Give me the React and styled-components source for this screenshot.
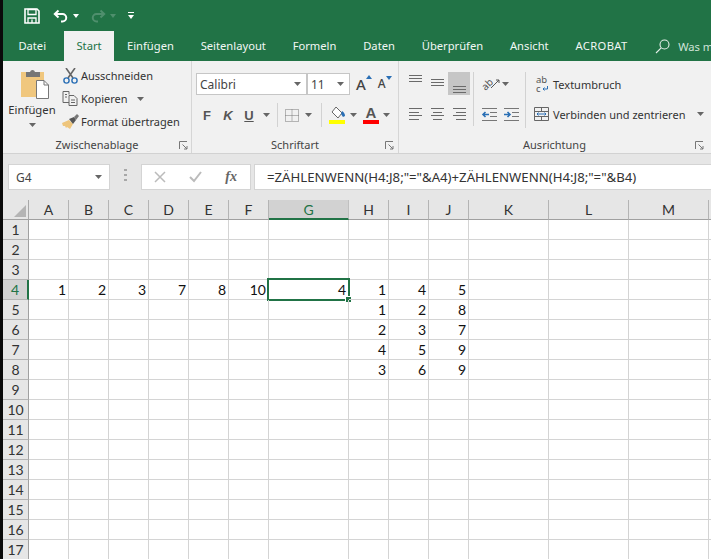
import React from "react";
import styled, { createGlobalStyle } from "styled-components";

const Global = createGlobalStyle`
  html, body { margin: 0; padding: 0; height: 559px; overflow: hidden; background: #fff; }
  * { box-sizing: border-box; }
`;
const UI = `"Noto Sans", "Open Sans", sans-serif`;
const GREEN = "#217346";

const Page = styled.div`display: flex; width: 711px; height: 559px; overflow: hidden; font-family: ${UI}; color: #444;`;
const Edge = styled.div`flex: 0 0 3px; background: #0a0a0a;`;
const Main = styled.div`flex: 1; min-width: 0; display: flex; flex-direction: column; overflow: hidden;`;

const TitleBar = styled.div`flex: none; height: 31px; background: ${GREEN}; display: flex; align-items: center; padding-left: 21px;`;
const QatIcon = styled.svg`display: block; margin-right: ${p => p.$mr || 0}px;`;
const TabBar = styled.div`flex: none; height: 30px; background: ${GREEN}; display: flex; padding-left: 2px;`;
const Tab = styled.div`
  padding: ${p => p.$active ? "0 12px" : "0 13.4px"}; margin: ${p => p.$active ? "0 0 0 5px" : "0"};
  font-size: 11.2px; line-height: 30px; white-space: nowrap; letter-spacing: ${p => p.$ls || 0}px;
  color: ${p => p.$active ? GREEN : "#f2f7f4"};
  background: ${p => p.$active ? "#f1f1f1" : "transparent"};
`;
const Search = styled.div`display: flex; align-items: center; gap: 8px; margin-left: 14px; color: #cfe3d8; font-size: 11.2px; white-space: nowrap;`;

const Ribbon = styled.div`flex: none; height: 93px; background: #f1f1f1; border-bottom: 1px solid #d2d2d2; display: flex;`;
const Group = styled.div`
  flex: 0 0 ${p => p.$w}px; min-width: 0; position: relative; display: flex; flex-direction: column;
  border-right: 1px solid ${p => p.$last ? "transparent" : "#d6d6d6"};
`;
const GroupBody = styled.div`flex: 1; display: flex; padding: ${p => p.$pad};`;
const GroupLabel = styled.div`height: 16px; line-height: 16px; font-size: 11px; text-align: center; color: #444;`;
const Launcher = styled.svg`position: absolute; right: ${p => p.$r || 4}px; bottom: 3px;`;

const PasteCol = styled.div`width: 48px; display: flex; flex-direction: column; align-items: center; font-size: 11.3px; color: #333;`;
const PasteArt = styled.svg`display: block; margin: 5px 0 0 6px; flex: none;`;
const PasteText = styled.div`line-height: 16px; margin: 3px 0 5px;`;
const ClipCol = styled.div`margin-left: 6px; display: flex; flex-direction: column;`;
const ClipRow = styled.div`height: 23px; display: flex; align-items: center; font-size: 11px; white-space: nowrap; color: #333;`;
const ClipIcon = styled.svg`flex: 0 0 19px;`;

const Caret = styled.svg`display: block; flex: none; margin-left: ${p => p.$ml || 0}px;`;
const FontCol = styled.div`display: flex; flex-direction: column;`;
const FontRow = styled.div`display: flex; align-items: center;`;
const Field = styled.div`
  width: ${p => p.$w}px; height: 22px; background: #fff; border: 1px solid #c6c6c6;
  display: flex; align-items: center; justify-content: space-between; padding: 0 5px 0 3px; font-size: 12px; color: #444;
`;
const GrowA = styled.div`display: flex; align-items: flex-start; margin-left: ${p => p.$ml}px; color: #444;`;
const GrowLetter = styled.span`font-size: ${p => p.$s}px; line-height: 18px; font-weight: 500;`;
const StyleRow = styled.div`height: 24px; margin-top: 8px; display: flex; align-items: center; padding-left: 3px;`;
const StyleBtn = styled.span`
  width: 16px; text-align: center; font-family: "Liberation Sans", sans-serif; font-size: 13px; font-weight: 700;
  font-style: ${p => p.$i ? "italic" : "normal"}; text-decoration: ${p => p.$u ? "underline" : "none"}; margin-right: ${p => p.$mr || 5}px; color: #555;
`;
const VSep = styled.div`width: 1px; height: ${p => p.$h || 24}px; background: #d2d2d2; margin: 0 ${p => p.$mr}px 0 ${p => p.$ml}px; flex: none;`;
const Tool = styled.svg`display: block; flex: none;`;
const ColorTool = styled.div`flex: none; width: 16px; margin-left: ${p => p.$ml || 0}px; display: flex; flex-direction: column; align-items: center;`;
const ColorLetter = styled.span`font-family: "Liberation Sans", sans-serif; font-weight: 700; font-size: 15px; line-height: 13px; height: 14px; color: #555;`;
const ColorBar = styled.div`width: 16px; height: 4px; background: ${p => p.$c};`;

const AlignGrid = styled.div`display: grid; grid-template-columns: repeat(3, 22px); grid-auto-rows: 23px; row-gap: 8px;`;
const AlignCell = styled.div`display: flex; justify-content: center; background: ${p => p.$on ? "#c6c6c6" : "transparent"};`;
const OrientCol = styled.div`display: grid; grid-template-columns: 22px 16px; grid-auto-rows: 23px; row-gap: 8px; align-items: center; width: 41px;`;
const OrientTop = styled.div`grid-column: 1 / 3; display: flex; align-items: center;`;
const OrientText = styled.span`display: block; font-size: 10px; line-height: 10px; color: #555; transform: rotate(-45deg); width: 12px; margin-right: -3px;`;
const WrapCol = styled.div`display: flex; flex-direction: column;`;
const WrapRow = styled.div`height: 24px; margin-bottom: ${p => p.$mb || 0}px; display: flex; align-items: center; font-size: 11px; white-space: nowrap; color: #333;`;
const WrapIcon = styled.svg`flex: none; margin-right: 4px;`;
const WrapGlyph = styled.div`flex: none; width: 15px; margin-right: 4px; display: flex; flex-direction: column; font-size: 9.5px; line-height: 9.5px; color: #555; text-align: center;`;
const WrapLine = styled.div`display: flex; align-items: center; justify-content: ${p => p.$start ? "flex-start" : "center"}; gap: 1px; padding-left: ${p => p.$start ? 2 : 0}px;`;

const FormulaBand = styled.div`flex: none; height: 46px; background: #e6e6e6; display: flex; align-items: flex-start; padding: 10px 0 0 5px;`;
const NameBox = styled.div`
  width: 102px; height: 26px; background: #fff; border: 1px solid #d4d4d4; display: flex; align-items: center;
  justify-content: space-between; padding: 0 7px; font-size: 12px; color: #444;
`;
const Dots = styled.div`width: 31px; display: flex; justify-content: center; padding-top: 5px;`;
const FxBox = styled.div`
  width: 110px; height: 26px; background: #fff; border: 1px solid #d4d4d4; display: flex; align-items: center;
  justify-content: space-between; padding: 0 13px 0 12px;
`;
const FxLabel = styled.span`font-family: "Liberation Serif", serif; font-style: italic; font-weight: 700; font-size: 14px; color: #666;`;
const FormulaInput = styled.div`
  flex: 1; margin-left: 3px; height: 26px; background: #fff; border: 1px solid #d4d4d4; border-right: 0; display: flex; align-items: center;
  padding-left: 12px; font-size: 13.2px; color: #333; white-space: nowrap;
`;

const Sheet = styled.div`
  flex: none; display: grid; grid-template-columns: 26px repeat(6, 40px) 80px repeat(3, 40px) repeat(3, 80px) 3px;
  grid-auto-rows: 20px; background: #fff; font-family: Lato, sans-serif;
`;
const Corner = styled.div`background: #e6e6e6; border-right: 1px solid #a8a8a8; border-bottom: 1px solid #a0a0a0; display: flex; align-items: flex-end; justify-content: flex-end; padding: 0 2px 2px 0;`;
const ColHead = styled.div`
  background: ${p => p.$on ? "#d2d2d2" : "#e6e6e6"}; color: ${p => p.$on ? GREEN : "#333"};
  border-right: 1px solid ${p => p.$on ? "#c0c0c0" : "#b4b4b4"};
  border-bottom: ${p => p.$on ? `2px solid ${GREEN}` : "1px solid #a0a0a0"};
  text-align: center; font-size: 14px; line-height: 20px; overflow: hidden;
`;
const RowHead = styled.div`
  background: ${p => p.$on ? "#d2d2d2" : "#e6e6e6"}; color: ${p => p.$on ? GREEN : "#333"};
  border-right: ${p => p.$on ? `2px solid ${GREEN}` : "1px solid #a0a0a0"};
  border-bottom: 1px solid #b4b4b4;
  text-align: center; font-size: 14px; line-height: 20px;
`;
const Cell = styled.div`
  position: relative; border-right: 1px solid #d4d4d4; border-bottom: 1px solid #d4d4d4;
  text-align: right; padding: 1px 2px 0 0; font-size: 14px; line-height: 18px; color: #111;
`;
const Selection = styled.span`position: absolute; left: -2px; top: -2px; right: -2px; bottom: -2px; border: 2px solid ${GREEN}; pointer-events: none;`;
const Handle = styled.span`position: absolute; right: -3px; bottom: -3px; width: 5px; height: 5px; background: ${GREEN}; outline: 1px solid #fff;`;

const DownCaret = ({ ml, c = "#666" }) => <Caret $ml={ml} width="7" height="4" viewBox="0 0 7 4"><path d="M0 0h7L3.5 4z" fill={c} /></Caret>;
const LauncherIcon = ({ r }) => (
  <Launcher $r={r} width="9" height="9" viewBox="0 0 9 9" fill="none" stroke="#777"><path d="M.5 8V.5H8" /><path d="M3.5 3.5L8 8M8 5v3H5" /></Launcher>
);
const Lines = ({ rows }) => (
  <svg width="15" height="23" viewBox="0 0 15 23" stroke="#6a6a6a" strokeWidth="1">
    {rows.map(([a, b, y]) => <path key={y} d={`M${a} ${y}H${b}`} />)}
  </svg>
);
const Indent = ({ flip }) => (
  <svg width="17" height="15" viewBox="0 0 17 15" fill="none">
    <g stroke="#777">{[1.5, 5.5, 9.5, 13.5].map(y => <path key={y} d={`M${y === 5.5 || y === 9.5 ? 9 : 1} ${y}H16`} />)}</g>
    <path d={flip ? "M1 7.5h6M4.5 5l2.5 2.5L4.5 10" : "M8 7.5H2M4.5 5L2 7.5 4.5 10"} stroke="#2a6fb5" strokeWidth="1.6" />
  </svg>
);

const TABS = ["Datei", "Start", "Einfügen", "Seitenlayout", "Formeln", "Daten", "Überprüfen", "Ansicht", "ACROBAT"];
const COLS = ["A", "B", "C", "D", "E", "F", "G", "H", "I", "J", "K", "L", "M", ""];
const VALUES = {
  4: { A: 1, B: 2, C: 3, D: 7, E: 8, F: 10, G: 4, H: 1, I: 4, J: 5 },
  5: { H: 1, I: 2, J: 8 },
  6: { H: 2, I: 3, J: 7 },
  7: { H: 4, I: 5, J: 9 },
  8: { H: 3, I: 6, J: 9 },
};
const ROWS = Array.from({ length: 17 }, (_, i) => i + 1);

export default function App() {
  return (
    <Page>
      <Global />
      <Edge />
      <Main>
        <TitleBar>
          <QatIcon $mr={13} width="16" height="16" viewBox="0 0 16 16" fill="none">
            <path d="M1 1h12l2 2v12H1z" stroke="#fff" strokeWidth="1.6" />
            <path d="M4 1.5h8v5H4z" stroke="#fff" strokeWidth="1.3" /><path d="M4 15V10h8v5M8 11.5V15" stroke="#fff" strokeWidth="1.3" />
          </QatIcon>
          <QatIcon $mr={4} width="16" height="14" viewBox="0 0 16 14" fill="none" stroke="#fff" strokeWidth="2">
            <path d="M5.5 1.5L1.8 5 5.5 8.5" /><path d="M2 5h7.5a3.7 3.7 0 0 1 0 7.5H8" />
          </QatIcon>
          <QatIcon $mr={11} width="6" height="4" viewBox="0 0 6 4"><path d="M0 0h6L3 4z" fill="#fff" /></QatIcon>
          <QatIcon $mr={4} width="16" height="14" viewBox="0 0 16 14" fill="none" stroke="#4f8f6d" strokeWidth="2">
            <path d="M10.5 1.5L14.2 5 10.5 8.5" /><path d="M14 5H6.5a3.7 3.7 0 0 0 0 7.5H8" />
          </QatIcon>
          <QatIcon $mr={12} width="6" height="4" viewBox="0 0 6 4"><path d="M0 0h6L3 4z" fill="#4f8f6d" /></QatIcon>
          <QatIcon width="6" height="7" viewBox="0 0 6 7"><path d="M0 .5h6" stroke="#fff" /><path d="M0 3h6L3 7z" fill="#fff" /></QatIcon>
        </TitleBar>
        <TabBar>
          {TABS.map(t => <Tab key={t} $active={t === "Start"} $ls={t === "ACROBAT" ? 0.4 : 0}>{t}</Tab>)}
          <Search>
            <svg width="15" height="15" viewBox="0 0 15 15" fill="none" stroke="#e6f0ea" strokeWidth="1.1"><circle cx="9.5" cy="5.5" r="4.5" /><path d="M6.2 8.8L1 14" /></svg>
            Was m
          </Search>
        </TabBar>

        <Ribbon>
          <Group $w={189}>
            <GroupBody $pad="3px 0 0 5px">
              <PasteCol>
                <PasteArt width="28" height="30" viewBox="0 0 28 30">
                  <path d="M0 3h23v25H0z" fill="#f0c77e" />
                  <path d="M5 3h4a2.6 2.6 0 0 1 5 0h5v5H5z" fill="#767676" />
                  <path d="M15.5 11.5H23l4.5 4.5v13.5h-12z" fill="#fff" stroke="#777" />
                  <path d="M23 11.5V16h4.5" fill="none" stroke="#777" />
                </PasteArt>
                <PasteText>Einfügen</PasteText>
                <DownCaret />
              </PasteCol>
              <ClipCol>
                <ClipRow>
                  <ClipIcon width="19" height="16" viewBox="0 0 19 16" fill="none">
                    <path d="M4 0l7 10M13 0L6 10" stroke="#666" strokeWidth="1.6" />
                    <circle cx="4.5" cy="12.5" r="2.6" stroke="#2a6fb5" strokeWidth="1.4" /><circle cx="12.5" cy="12.5" r="2.6" stroke="#2a6fb5" strokeWidth="1.4" />
                  </ClipIcon>
                  Ausschneiden
                </ClipRow>
                <ClipRow>
                  <ClipIcon width="19" height="15" viewBox="0 0 19 15" fill="none" stroke="#666">
                    <path d="M1 .5h6v3M1 .5v11h6M7 4.5h5l3 3v7H7zM3 3.5h2M3 6h2M9 9h4M9 11.5h4" />
                  </ClipIcon>
                  Kopieren
                  <DownCaret ml={9} />
                </ClipRow>
                <ClipRow>
                  <ClipIcon width="19" height="15" viewBox="0 0 19 15" fill="none">
                    <path d="M0 9l7-3 4 4-3 5-3-2-1 1-1-2-2 0z" fill="#eec57c" />
                    <path d="M7 5l5-2 2 3-3 4z" fill="#555" /><path d="M12 3l3-3 2 2-3 4z" fill="#777" />
                  </ClipIcon>
                  Format übertragen
                </ClipRow>
              </ClipCol>
            </GroupBody>
            <GroupLabel>Zwischenablage</GroupLabel>
            <LauncherIcon r={3} />
          </Group>

          <Group $w={207}>
            <GroupBody $pad="12px 0 0 4px">
              <FontCol>
                <FontRow>
                  <Field $w={111}>Calibri<DownCaret /></Field>
                  <Field $w={43}>11<DownCaret /></Field>
                  <GrowA $ml={6}>
                    <GrowLetter $s={15}>A</GrowLetter>
                    <svg width="6" height="5" viewBox="0 0 6 5"><path d="M0 4h6L3 0z" fill="#2a6fb5" /></svg>
                  </GrowA>
                  <GrowA $ml={6}>
                    <GrowLetter $s={12}>A</GrowLetter>
                    <svg width="6" height="5" viewBox="0 0 6 5"><path d="M0 1h6L3 5z" fill="#2a6fb5" /></svg>
                  </GrowA>
                </FontRow>
                <StyleRow>
                  <StyleBtn>F</StyleBtn>
                  <StyleBtn $i>K</StyleBtn>
                  <StyleBtn $u $mr={1}>U</StyleBtn>
                  <DownCaret ml={5} />
                  <VSep $ml={7} $mr={7} />
                  <Tool width="14" height="13" viewBox="0 0 14 13" fill="none" stroke="#777" strokeDasharray="1 1"><path d="M.5.5h13v12H.5zM7 .5v12M.5 6.5h13" /></Tool>
                  <DownCaret ml={6} />
                  <VSep $ml={9} $mr={7} />
                  <ColorTool>
                    <Tool width="16" height="14" viewBox="0 0 16 14" fill="none">
                      <path d="M7 1l6 6-4 5-6-6z" stroke="#666" fill="#fff" /><path d="M13 5c2 1 3 3 3 5l-2 1-2-3z" fill="#2a6fb5" />
                    </Tool>
                    <ColorBar $c="#ffff00" />
                  </ColorTool>
                  <DownCaret ml={5} />
                  <ColorTool $ml={6}>
                    <ColorLetter>A</ColorLetter>
                    <ColorBar $c="#ff0000" />
                  </ColorTool>
                  <DownCaret ml={4} />
                </StyleRow>
              </FontCol>
            </GroupBody>
            <GroupLabel>Schriftart</GroupLabel>
            <LauncherIcon r={4} />
          </Group>

          <Group $w={312} $last>
            <GroupBody $pad="11px 0 0 5px">
              <AlignGrid>
                <AlignCell><Lines rows={[[1, 14, 3.5], [1, 14, 6.5], [1, 14, 9.5]]} /></AlignCell>
                <AlignCell><Lines rows={[[1, 14, 7.5], [1, 14, 10.5], [1, 14, 13.5]]} /></AlignCell>
                <AlignCell $on><Lines rows={[[1, 14, 14.5], [1, 14, 17.5], [1, 14, 20.5]]} /></AlignCell>
                <AlignCell><Lines rows={[[1, 14, 5.5], [1, 11, 9.5], [1, 14, 12.5], [1, 11, 16.5]]} /></AlignCell>
                <AlignCell><Lines rows={[[1, 14, 5.5], [3, 12, 9.5], [1, 14, 12.5], [3, 12, 16.5]]} /></AlignCell>
                <AlignCell><Lines rows={[[1, 14, 5.5], [4, 14, 9.5], [1, 14, 12.5], [4, 14, 16.5]]} /></AlignCell>
              </AlignGrid>
              <VSep $ml={3} $mr={7} $h={54} />
              <OrientCol>
                <OrientTop>
                  <OrientText>ab</OrientText>
                  <Tool width="10" height="10" viewBox="0 0 10 10" fill="none" stroke="#555"><path d="M1 9L9 1M6 1h3v3" /></Tool>
                  <DownCaret ml={2} />
                </OrientTop>
                <Indent />
                <Indent flip />
              </OrientCol>
              <VSep $ml={3} $mr={8} $h={56} />
              <WrapCol>
                <WrapRow $mb={6}>
                  <WrapGlyph>
                    <WrapLine>ab</WrapLine>
                    <WrapLine $start>c
                      <svg width="6" height="5" viewBox="0 0 6 5" fill="none" stroke="#2a6fb5"><path d="M5.5 0v3H1M2.5 1.5L1 3l1.5 1.5" /></svg>
                    </WrapLine>
                  </WrapGlyph>
                  Textumbruch
                </WrapRow>
                <WrapRow>
                  <WrapIcon width="15" height="14" viewBox="0 0 15 14" fill="none" stroke="#666">
                    <path d="M.5.5h14v13H.5zM.5 4.5h14M.5 9.5h14M7.5.5v4M7.5 9.5v4" />
                    <path d="M3 7h9M4.5 5.5L3 7l1.5 1.5M10.5 5.5L12 7l-1.5 1.5" stroke="#2a6fb5" />
                  </WrapIcon>
                  Verbinden und zentrieren
                  <DownCaret ml={12} />
                </WrapRow>
              </WrapCol>
            </GroupBody>
            <GroupLabel>Ausrichtung</GroupLabel>
            <LauncherIcon r={6} />
          </Group>
        </Ribbon>

        <FormulaBand>
          <NameBox>G4<DownCaret /></NameBox>
          <Dots>
            <svg width="3" height="14" viewBox="0 0 3 14" fill="#a8a8a8"><path d="M0 0h3v2H0zM0 5h3v2H0zM0 10h3v2H0z" /></svg>
          </Dots>
          <FxBox>
            <svg width="12" height="12" viewBox="0 0 12 12" stroke="#bbb" strokeWidth="1.5" fill="none"><path d="M1 1l10 10M11 1L1 11" /></svg>
            <svg width="13" height="12" viewBox="0 0 13 12" stroke="#bbb" strokeWidth="2" fill="none"><path d="M1 6l4 4 7-9" /></svg>
            <FxLabel>fx</FxLabel>
          </FxBox>
          <FormulaInput>=ZÄHLENWENN(H4:J8;"="&amp;A4)+ZÄHLENWENN(H4:J8;"="&amp;B4)</FormulaInput>
        </FormulaBand>

        <Sheet>
          <Corner>
            <svg width="12" height="12" viewBox="0 0 12 12"><path d="M12 0v12H0z" fill="#b4b4b4" /></svg>
          </Corner>
          {COLS.map((c, i) => <ColHead key={i} $on={c === "G"}>{c}</ColHead>)}
          {ROWS.map(r => (
            <React.Fragment key={r}>
              <RowHead $on={r === 4}>{r}</RowHead>
              {COLS.map((c, i) => {
                const sel = r === 4 && c === "G";
                return (
                  <Cell key={i}>
                    {VALUES[r]?.[c]}
                    {sel && <Selection />}
                    {sel && <Handle />}
                  </Cell>
                );
              })}
            </React.Fragment>
          ))}
        </Sheet>
      </Main>
    </Page>
  );
}
